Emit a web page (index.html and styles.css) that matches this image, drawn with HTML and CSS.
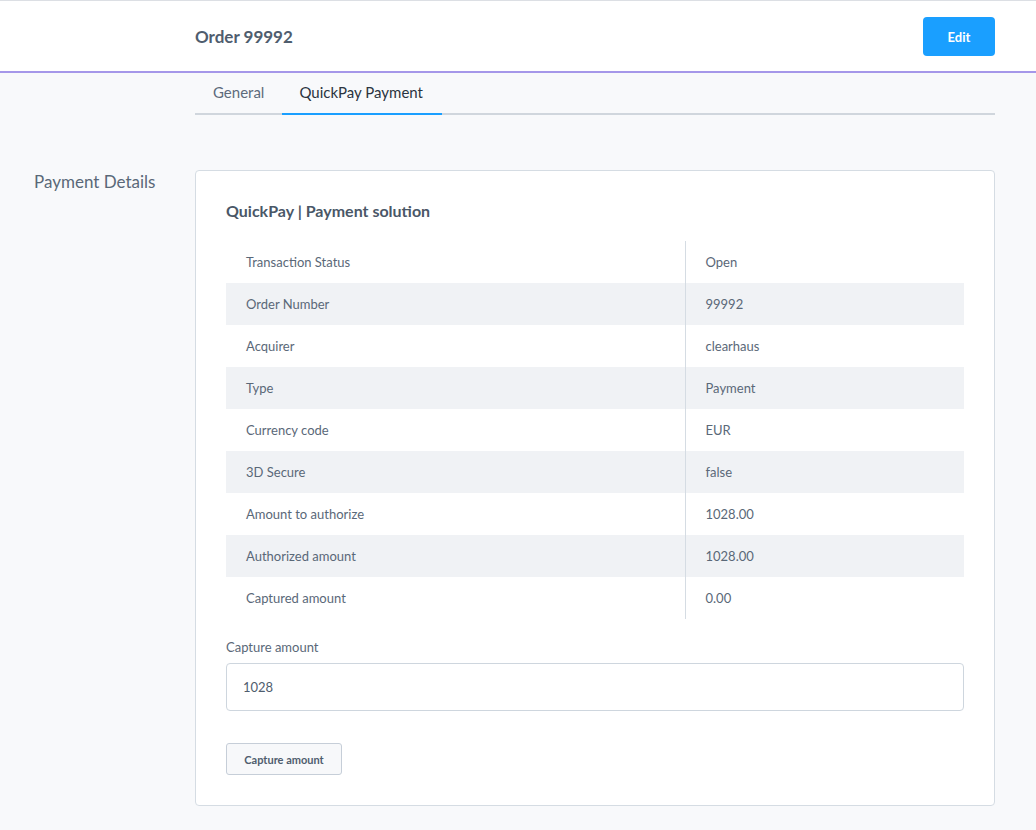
FILE: index.html
```html
<!DOCTYPE html>
<html>
<head>
<meta charset="utf-8">
<link rel="stylesheet" href="styles.css">
</head>
<body>
<header class="topbar">
  <div class="topbar-inner">
    <h1 class="title">Order 99992</h1>
    <button class="btn-primary">Edit</button>
  </div>
</header>
<nav class="tabs">
  <a class="tab">General</a>
  <a class="tab active">QuickPay Payment</a>
</nav>
<main class="section">
  <div class="section-label">Payment Details</div>
  <div class="card">
    <h2 class="card-title">QuickPay | Payment solution</h2>
    <table class="details">
      <tr><td>Transaction Status</td><td>Open</td></tr>
      <tr><td>Order Number</td><td>99992</td></tr>
      <tr><td>Acquirer</td><td>clearhaus</td></tr>
      <tr><td>Type</td><td>Payment</td></tr>
      <tr><td>Currency code</td><td>EUR</td></tr>
      <tr><td>3D Secure</td><td>false</td></tr>
      <tr><td>Amount to authorize</td><td>1028.00</td></tr>
      <tr><td>Authorized amount</td><td>1028.00</td></tr>
      <tr><td>Captured amount</td><td>0.00</td></tr>
    </table>
    <label class="field-label">Capture amount</label>
    <div class="input">1028</div>
    <button class="btn-secondary">Capture amount</button>
  </div>
</main>
</body>
</html>
```
FILE: styles.css
```css
* { box-sizing: border-box; }
html, body { margin: 0; padding: 0; }
body {
  background: #f8f9fb;
  font-family: "Lato", "Open Sans", sans-serif;
  color: #525f6f;
}
.topbar {
  background: #fff;
  border-top: 1px solid #dcdfe4;
  border-bottom: 2px solid #a597e9;
  height: 73px;
}
.topbar-inner {
  margin-left: 195px;
  width: 800px;
  height: 70px;
  display: flex;
  align-items: center;
  justify-content: space-between;
}
.title {
  margin: 0;
  font-size: 17px;
  font-weight: 700;
  color: #4f5d6e;
  padding-top: 0;
}
.btn-primary {
  width: 72px;
  height: 39px;
  background: #1a9fff;
  border: 0;
  border-radius: 4px;
  color: #fff;
  font-family: inherit;
  font-weight: 700;
  font-size: 13px;
  margin-top: 1px;
}
.tabs {
  margin-left: 195px;
  width: 800px;
  height: 42px;
  border-bottom: 2px solid #d0d6dd;
  display: flex;
}
.tab {
  padding: 10px 18px 0;
  font-size: 15px;
  color: #5d6b7b;
  margin-bottom: -2px;
}
.tab.active {
  color: #2b3440;
  border-bottom: 2px solid #1a9fff;
  width: 160px;
  padding-left: 17px;
}
.section {
  display: flex;
  padding-top: 55px;
}
.section-label {
  width: 195px;
  padding-left: 34px;
  padding-top: 1px;
  font-size: 17px;
  color: #5a6878;
}
.card {
  width: 800px;
  background: #fff;
  border: 1px solid #d5dce3;
  border-radius: 4px;
  padding: 30px 30px 30px;
}
.card-title {
  margin: 0 0 20px;
  font-size: 16px;
  font-weight: 700;
  color: #4a5767;
  line-height: 20px;
}
.details {
  width: 738px;
  border-collapse: collapse;
  font-size: 13px;
  color: #5a6878;
}
.details td {
  height: 42px;
  padding: 0 20px;
}
.details td:first-child {
  width: 459px;
  border-right: 1px solid #d5dce3;
}
.details tr:nth-child(even) td { background: #f0f2f5; }
.field-label {
  display: block;
  margin-top: 20px;
  font-size: 13px;
  color: #5a6878;
  line-height: 16px;
}
.input {
  margin-top: 8px;
  height: 48px;
  border: 1px solid #ced6de;
  border-radius: 4px;
  padding: 0 16px;
  display: flex;
  align-items: center;
  font-size: 13px;
  color: #4f5d6e;
}
.btn-secondary {
  margin-top: 32px;
  width: 116px;
  height: 32px;
  background: #f7f8fa;
  border: 1px solid #c6ced8;
  border-radius: 3px;
  font-family: inherit;
  font-weight: 700;
  font-size: 11px;
  color: #4f5d6e;
}
```
